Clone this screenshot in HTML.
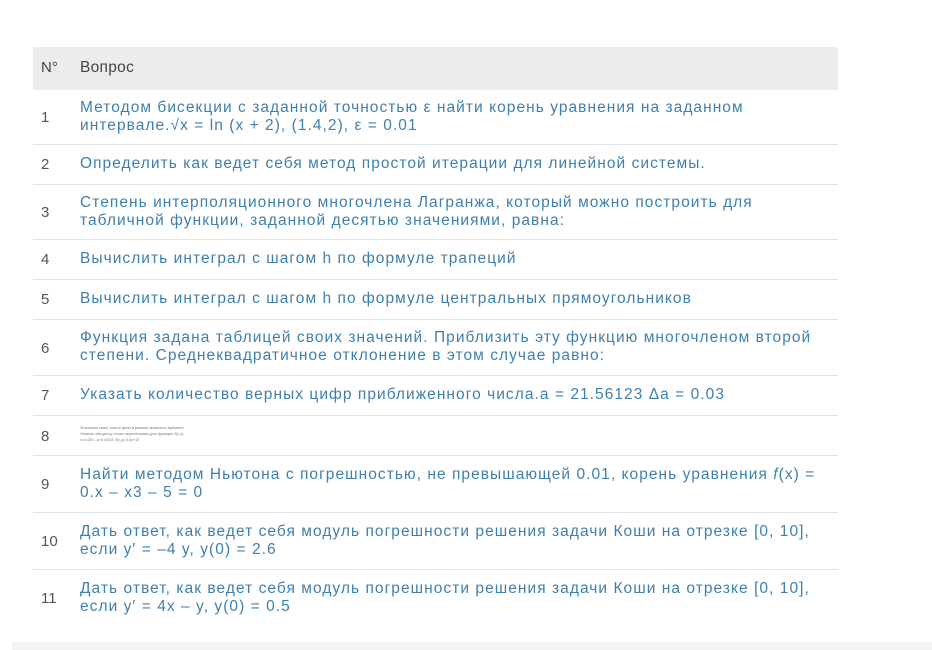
<!DOCTYPE html><html><head><meta charset="utf-8"><style>
body{margin:0;width:932px;height:650px;background:#fff;position:relative;overflow:hidden;font-family:"Liberation Sans",sans-serif;}
.t{position:absolute;left:33px;top:47px;width:805px;height:573px;overflow:hidden;}
.r{position:absolute;left:0;width:805px;border-bottom:1px solid #dde3e8;box-sizing:border-box;}
.n{position:absolute;left:8px;color:#555;font-size:15px;}
.q{position:absolute;left:47px;width:760px;white-space:nowrap;color:#3f7fae;font-size:15.5px;letter-spacing:1.05px;line-height:18px;}
.h{background:#ececec;border:none}
.band{position:absolute;left:12px;top:642px;width:920px;height:8px;background:#f3f3f3;}
</style></head><body>
<div class="t">
<div class="r h" style="top:0;height:43px"><span class="n" style="top:12px;color:#444">N°</span><span class="q" style="top:12px;color:#444;letter-spacing:0.3px">Вопрос</span></div>
<div class="r" style="top:43px;height:55px"><span class="n" style="top:19px">1</span><div class="q" style="top:9px">Методом бисекции с заданной точностью ε найти корень уравнения на заданном<br>интервале.√x = ln (x + 2), (1.4,2), ε = 0.01</div></div>
<div class="r" style="top:98px;height:40px"><span class="n" style="top:11px">2</span><div class="q" style="top:10px">Определить как ведет себя метод простой итерации для линейной системы.</div></div>
<div class="r" style="top:138px;height:55px"><span class="n" style="top:19px">3</span><div class="q" style="top:9px">Степень интерполяционного многочлена Лагранжа, который можно построить для<br>табличной функции, заданной десятью значениями, равна:</div></div>
<div class="r" style="top:193px;height:40px"><span class="n" style="top:11px">4</span><div class="q" style="top:10px">Вычислить интеграл с шагом h по формуле трапеций</div></div>
<div class="r" style="top:233px;height:40px"><span class="n" style="top:11px">5</span><div class="q" style="top:10px">Вычислить интеграл с шагом h по формуле центральных прямоугольников</div></div>
<div class="r" style="top:273px;height:56px"><span class="n" style="top:20px">6</span><div class="q" style="top:9px">Функция задана таблицей своих значений. Приблизить эту функцию многочленом второй<br>степени. Среднеквадратичное отклонение в этом случае равно:</div></div>
<div class="r" style="top:329px;height:40px"><span class="n" style="top:11px">7</span><div class="q" style="top:10px">Указать количество верных цифр приближенного числа.a = 21.56123 Δa = 0.03</div></div>
<div class="r" style="top:369px;height:40px"><span class="n" style="top:12px">8</span><div class="q" style="top:9px;font-size:4px;line-height:6px;letter-spacing:0;color:#777">Значения силы тока в цепи в разные моменты времени<br>Указать абсциссу точки пересечения для функции f(x,y)<br>x=0.001, y=0.0023. f(x,y)=1/(x+2)</div></div>
<div class="r" style="top:409px;height:57px"><span class="n" style="top:20px">9</span><div class="q" style="top:10px">Найти методом Ньютона с погрешностью, не превышающей 0.01, корень уравнения <i>f</i>(x) =<br>0.x – x3 – 5 = 0</div></div>
<div class="r" style="top:466px;height:57px"><span class="n" style="top:20px">10</span><div class="q" style="top:10px">Дать ответ, как ведет себя модуль погрешности решения задачи Коши на отрезке [0, 10],<br>если y′ = –4 y, y(0) = 2.6</div></div>
<div class="r" style="top:523px;height:57px;border:none"><span class="n" style="top:20px">11</span><div class="q" style="top:10px">Дать ответ, как ведет себя модуль погрешности решения задачи Коши на отрезке [0, 10],<br>если y′ = 4x – y, y(0) = 0.5</div></div>
</div>
<div class="band"></div>
</body></html>
